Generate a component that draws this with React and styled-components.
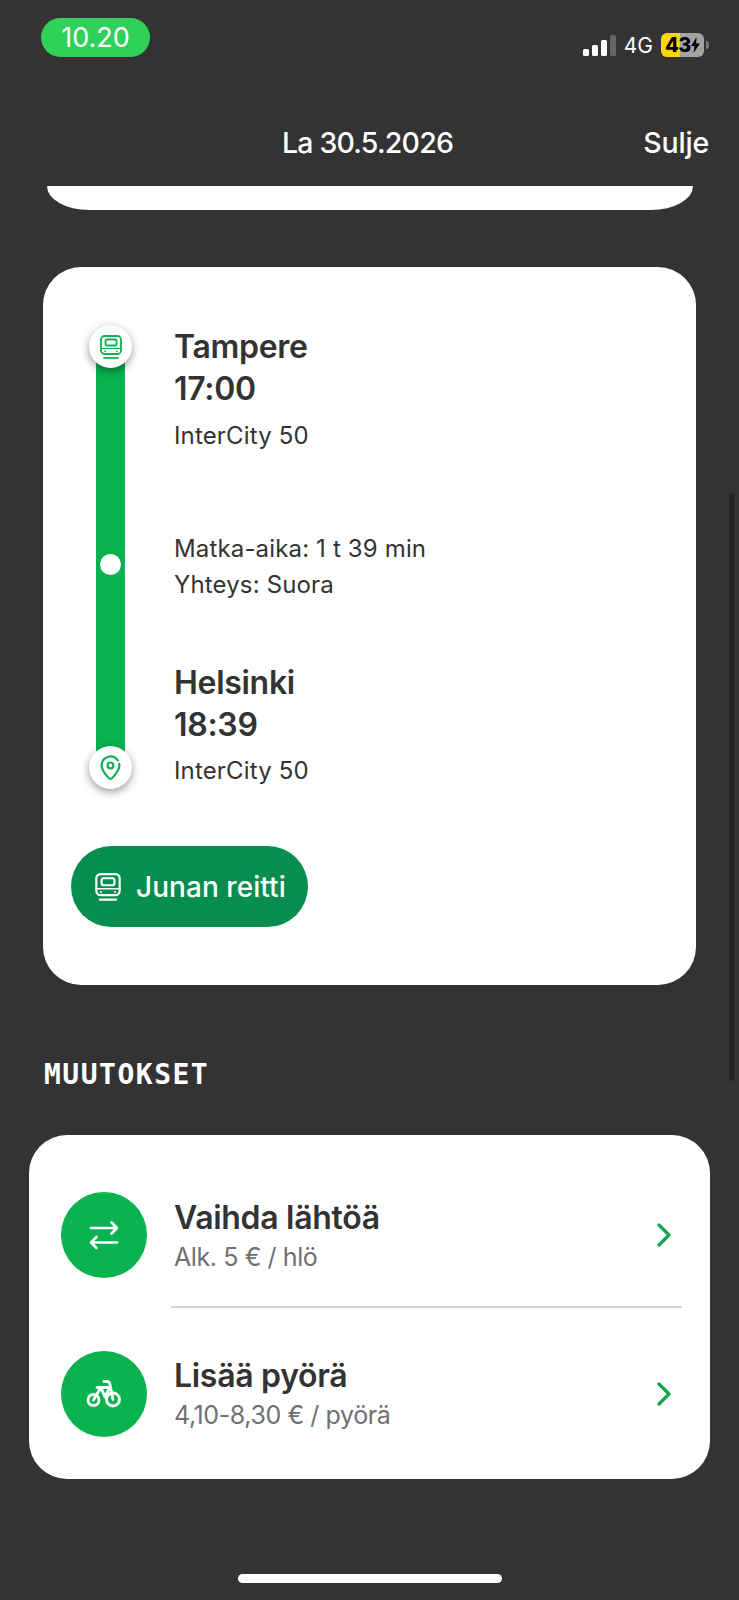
import React from "react";
import styled, { createGlobalStyle } from "styled-components";

const TrainIcon = ({ size = 24, color = "#0fb14f" }) => (
  <svg width={size} height={size} viewBox="0 0 24 24" fill="none" stroke={color} strokeWidth="1.8" strokeLinecap="round" strokeLinejoin="round">
    <rect x="2" y="1" width="20" height="18" rx="3.5" />
    <rect x="6.5" y="4.500" width="11" height="6" rx="1.500" />
    <path d="M2 13.500h20" strokeWidth="1.200" />
    <path d="M6 16.300h.01M18 16.300h.01" />
    <path d="M5 22.800h14" />
  </svg>
);

const PinIcon = () => (
  <svg width="25" height="25" viewBox="0 0 24 24" fill="none" stroke="#0fb14f" strokeWidth="2.100" strokeLinecap="round" strokeLinejoin="round">
    <path d="M12 23c-1 0-8.500-7.500-8.500-13a8.500 8.500 0 0 1 15.500-4.800M20.300 8.500c.2.500.2 1 .2 1.500 0 5.500-7.500 13-8.500 13" />
    <circle cx="12" cy="10" r="2.800" />
  </svg>
);

const SwapIcon = () => (
  <svg width="32" height="32" viewBox="0 0 32 32" fill="none" stroke="#fff" strokeWidth="2.600" strokeLinecap="round" strokeLinejoin="round">
    <path d="M3 9h26M23.500 3.500 29 9l-5.500 5.500" />
    <path d="M29 23.500H3M8.500 18 3 23.500 8.500 29" />
  </svg>
);

const BikeIcon = () => (
  <svg width="36" height="30" viewBox="0 0 36 30" fill="none" stroke="#fff" strokeWidth="2.800" strokeLinecap="round" strokeLinejoin="round">
    <circle cx="7.500" cy="21" r="5.500" />
    <circle cx="27" cy="20.500" r="6.500" />
    <path d="M18 2.500h3c1.500 0 2.300 1 2.800 2.200L27 20.500" />
    <path d="M11 8.500h11M15 8.500 7.500 21M15 8.500l4 9.500M19 18l4-8" />
  </svg>
);

const Chevron = () => (
  <svg width="16" height="24" viewBox="0 0 16 24" fill="none" stroke="#0fa64c" strokeWidth="3.200" strokeLinecap="round" strokeLinejoin="round">
    <path d="M3 2l10 10-10 10" />
  </svg>
);

const BatteryBolt = () => (
  <svg width="9" height="16" viewBox="0 0 9 16" fill="#000">
    <path d="M5.500 0 0 9h3.500L2.500 16 9 6.500H5.200z" />
  </svg>
);

const Global = createGlobalStyle`
  html, body {
    margin: 0;
    padding: 0;
    background: #333333;
  }
  body {
    font-family: Inter, "Liberation Sans", sans-serif;
  }
`;

const Screen = styled.div`
  position: relative;
  width: 739px;
  height: 1600px;
  overflow: hidden;
  background: #333333;
  box-sizing: border-box;
`;

const StatusBar = styled.div`
  height: 82px;
  display: flex;
  justify-content: space-between;
  padding: 18px 30px 0 41px;
  box-sizing: border-box;
`;

const Clock = styled.div`
  width: 109px;
  height: 39px;
  border-radius: 20px;
  background: #30d158;
  color: #fff;
  font-size: 27px;
  display: flex;
  align-items: center;
  justify-content: center;
`;

const StatusRight = styled.div`
  display: flex;
  align-items: center;
  height: 26px;
  margin-top: 14px;
  gap: 8px;
`;

const Signal = styled.div`
  display: flex;
  align-items: flex-end;
  gap: 3px;
  height: 21px;
`;

const SignalBar = styled.span`
  width: 6px;
  height: ${(p) => p.$h}px;
  border-radius: 1.5px;
  background: ${(p) => (p.$off ? "#666" : "#fff")};
`;

const NetLabel = styled.span`
  color: #fff;
  font-size: 21px;
`;

const Battery = styled.div`
  display: flex;
  align-items: center;
  width: 43px;
  height: 24px;
  border-radius: 6px;
  overflow: hidden;
  background: linear-gradient(90deg, #ffd60a 0 44%, #a3a3a3 44% 100%);
  color: #000;
  font-size: 20px;
  font-weight: 800;
  padding-left: 4px;
  box-sizing: border-box;
  white-space: nowrap;
  letter-spacing: -0.6px;
`;

const BatteryNub = styled.span`
  width: 3px;
  height: 8px;
  margin-left: -6px;
  border-radius: 0 3px 3px 0;
  background: #777;
`;

const NavBar = styled.div`
  height: 104px;
  position: relative;
  display: flex;
  justify-content: center;
  padding: 44px 4px 0 0;
  box-sizing: border-box;
  color: #fff;
  font-size: 28.500px;
  font-weight: 500;
  letter-spacing: -0.8px;
  line-height: 34px;
`;

const CloseLink = styled.span`
  position: absolute;
  right: 30px;
  top: 44px;
  letter-spacing: -0.2px;
`;

const ClippedCard = styled.div`
  width: 646px;
  height: 24px;
  margin: 0 0 57px 47px;
  background: #fff;
  border-radius: 0 0 42px 42px / 0 0 24px 24px;
`;

const TripCard = styled.div`
  width: 653px;
  height: 718px;
  margin-left: 43px;
  padding: 62px 28px 0;
  box-sizing: border-box;
  background: #fff;
  border-radius: 38px;
`;

const Trip = styled.div`
  display: grid;
  grid-template-columns: 103px 1fr;
  height: 517px;
`;

const Rail = styled.div`
  position: relative;
  width: 78px;
`;

const RailLine = styled.div`
  position: absolute;
  left: 25px;
  top: 20px;
  width: 29px;
  height: 415px;
  background: #0ab250;
`;

const RailStop = styled.div`
  position: absolute;
  left: 18px;
  top: ${(p) => p.$top}px;
  width: 43px;
  height: 43px;
  border-radius: 50%;
  background: #fff;
  box-shadow: 0 3px 9px rgba(0, 0, 0, 0.4);
  display: flex;
  align-items: center;
  justify-content: center;
`;

const RailDot = styled.div`
  position: absolute;
  left: 29px;
  top: 225px;
  width: 21px;
  height: 21px;
  border-radius: 50%;
  background: #fff;
`;

const TripInfo = styled.div`
  display: flex;
  flex-direction: column;
  margin-top: -3px;
  color: #333;
`;

const Place = styled.div`
  font-size: 32px;
  font-weight: 600;
  line-height: 42px;
  letter-spacing: -0.3px;
  margin-top: ${(p) => p.$mt || 0}px;
`;

const Detail = styled.div`
  font-size: 24px;
  line-height: 36px;
  margin-top: ${(p) => p.$mt || 0}px;
  letter-spacing: 0.15px;
`;

const RouteButton = styled.button`
  display: flex;
  align-items: center;
  gap: 14px;
  width: 237px;
  height: 81px;
  padding: 0 0 0 23px;
  box-sizing: border-box;
  border: 0;
  border-radius: 41px;
  background: #068d4f;
  color: #fff;
  font: 500 28px Inter, "Liberation Sans", sans-serif;
  letter-spacing: 0.05px;
`;

const SectionTitle = styled.h2`
  margin: 72px 0 0 44px;
  height: 78px;
  color: #fff;
  font: 700 28px/36px "DejaVu Sans Mono", "Liberation Mono", monospace;
  letter-spacing: 1.5px;
`;

const ChangesCard = styled.div`
  width: 681px;
  height: 344px;
  margin-left: 29px;
  background: #fff;
  border-radius: 38px;
  box-sizing: border-box;
  padding-left: 32px;
`;

const ChangeRow = styled.div`
  height: ${(p) => p.$h}px;
  display: flex;
  align-items: center;
  padding-top: ${(p) => p.$pt}px;
  box-sizing: border-box;
`;

const ChangeIcon = styled.div`
  width: 86px;
  height: 86px;
  border-radius: 50%;
  background: #0ab250;
  display: flex;
  align-items: center;
  justify-content: center;
  flex: none;
`;

const ChangeText = styled.div`
  flex: 1;
  margin-left: 27px;
`;

const ChangeTitle = styled.div`
  color: #333;
  font-size: 32px;
  font-weight: 600;
  line-height: 40px;
  letter-spacing: -0.3px;
`;

const ChangeSub = styled.div`
  color: #6e7074;
  font-size: 25px;
  line-height: 32px;
  margin-top: 3px;
  letter-spacing: -0.4px;
`;

const ChevronWrap = styled.div`
  margin-right: 38px;
  display: flex;
`;

const Divider = styled.div`
  height: 2px;
  margin: 0 28px 0 110px;
  background: #d2d2d2;
`;

const ScrollThumb = styled.div`
  position: absolute;
  top: 493px;
  right: 5px;
  width: 5px;
  height: 588px;
  border-radius: 3px;
  background: #232323;
`;

const HomeIndicator = styled.div`
  position: absolute;
  left: 238px;
  bottom: 17px;
  width: 264px;
  height: 9px;
  border-radius: 5px;
  background: #fff;
`;

const App = () => {
  return (
    <Screen>
      <Global />
      <StatusBar>
        <Clock>10.20</Clock>
        <StatusRight>
          <Signal>
            <SignalBar $h={7} />
            <SignalBar $h={11} />
            <SignalBar $h={16} />
            <SignalBar $h={21} $off />
          </Signal>
          <NetLabel>4G</NetLabel>
          <Battery>
            43
            <BatteryBolt />
          </Battery>
          <BatteryNub />
        </StatusRight>
      </StatusBar>
      <NavBar>
        La 30.5.2026
        <CloseLink>Sulje</CloseLink>
      </NavBar>
      <ClippedCard />
      <TripCard>
        <Trip>
          <Rail>
            <RailLine />
            <RailStop $top={-4}>
              <TrainIcon />
            </RailStop>
            <RailDot />
            <RailStop $top={417}>
              <PinIcon />
            </RailStop>
          </Rail>
          <TripInfo>
            <Place>Tampere</Place>
            <Place>17:00</Place>
            <Detail $mt={8}>InterCity 50</Detail>
            <Detail $mt={77}>Matka-aika: 1 t 39 min</Detail>
            <Detail>Yhteys: Suora</Detail>
            <Place $mt={59}>Helsinki</Place>
            <Place>18:39</Place>
            <Detail $mt={7}>InterCity 50</Detail>
          </TripInfo>
        </Trip>
        <RouteButton>
          <TrainIcon size={28} color="#fff" />
          Junan reitti
        </RouteButton>
      </TripCard>
      <SectionTitle>MUUTOKSET</SectionTitle>
      <ChangesCard>
        <ChangeRow $h={171} $pt={29}>
          <ChangeIcon>
            <SwapIcon />
          </ChangeIcon>
          <ChangeText>
            <ChangeTitle>Vaihda lähtöä</ChangeTitle>
            <ChangeSub>Alk. 5 € / hlö</ChangeSub>
          </ChangeText>
          <ChevronWrap>
            <Chevron />
          </ChevronWrap>
        </ChangeRow>
        <Divider />
        <ChangeRow $h={171} $pt={0}>
          <ChangeIcon>
            <BikeIcon />
          </ChangeIcon>
          <ChangeText>
            <ChangeTitle>Lisää pyörä</ChangeTitle>
            <ChangeSub>4,10-8,30 € / pyörä</ChangeSub>
          </ChangeText>
          <ChevronWrap>
            <Chevron />
          </ChevronWrap>
        </ChangeRow>
      </ChangesCard>
      <ScrollThumb />
      <HomeIndicator />
    </Screen>
  );
};

export default App;
